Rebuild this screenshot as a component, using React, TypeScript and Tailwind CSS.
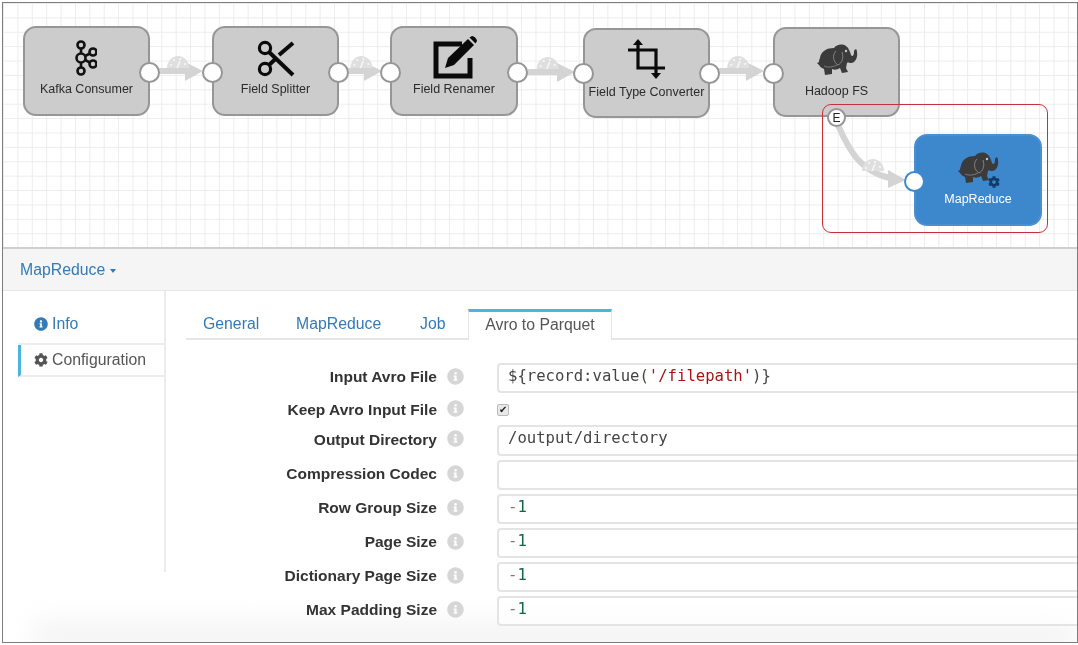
import React from 'react';
import { FaCog, FaInfoCircle } from 'react-icons/fa';

const Elephant: React.FC<{ className?: string }> = ({ className }) => (
  <svg viewBox="0 0 42 34" className={className}>
    <path
      fill="#3b3b3b"
      d="M4 15C5 8 11 5 18 5C20 2 26 0 30 3C33 5 34 9 35 12C36 14 38 13 38 9C38 6 41 5 41 9C42 15 39 20 35 20C33 20 32 19 31 20L30 25L32 29L26 30L24 25C21 27 18 27 16 26L16 31L9 32L8 26C6 25 4 24 3 22L1 20L3 19C3 18 3 17 4 15Z"
    />
    <path d="M20 8C16 12 17 19 22 22C26 20 28 15 26 9" fill="none" stroke="#8a8a8a" strokeWidth="0.9" />
    <path d="M8 23C12 25 17 24 21 22" fill="none" stroke="#8a8a8a" strokeWidth="0.8" />
    <circle cx="30" cy="8" r="1.2" fill="#c9c9c9" />
  </svg>
);

const KafkaIcon = () => (
  <svg viewBox="0 0 24 36" className="h-9 w-6">
    <g fill="none" stroke="#111" strokeWidth="2.6">
      <path d="M8 8V28M8 18L20 12M8 18L20 24" />
      <circle cx="8" cy="5" r="3.5" fill="#ccc" />
      <circle cx="8" cy="18" r="4.5" fill="#ccc" />
      <circle cx="8" cy="31" r="3.5" fill="#ccc" />
      <circle cx="20" cy="12" r="3.5" fill="#ccc" />
      <circle cx="20" cy="24" r="3.5" fill="#ccc" />
    </g>
  </svg>
);

const ScissorsIcon = () => (
  <svg viewBox="0 0 38 38" className="h-[38px] w-[38px]">
    <g fill="none" stroke="#0a0a0a">
      <circle cx="8" cy="8" r="5.6" strokeWidth="3.2" />
      <circle cx="8" cy="29" r="5.6" strokeWidth="3.2" />
      <path d="M12 12L36 35" strokeWidth="4" />
      <path d="M12 25L19.5 18" strokeWidth="4" />
      <path d="M22 15L36 3" strokeWidth="4" />
    </g>
  </svg>
);

const EditIcon = () => (
  <svg viewBox="0 0 46 44" className="h-11 w-[46px]">
    <path d="M29 8H3V40H37V22" fill="none" stroke="#0a0a0a" strokeWidth="5" />
    <path d="M12 32L15 22L35 3L41 9L21 29Z" fill="#0a0a0a" />
    <path d="M36.5 1.5L39 0C41 0 44 3 44 5L42.5 7.5Z" fill="#0a0a0a" />
  </svg>
);

const CropIcon = () => (
  <svg viewBox="0 0 38 40" className="h-10 w-[38px]">
    <g fill="none" stroke="#0a0a0a" strokeWidth="3.2">
      <path d="M10 5V29H37" />
      <path d="M0 11H28V35" />
    </g>
    <path d="M10 0L15 6H5Z" fill="#0a0a0a" />
    <path d="M28 40L33 34H23Z" fill="#0a0a0a" />
  </svg>
);

const Edge: React.FC<{ x1: number; x2: number; y: number }> = ({ x1, x2, y }) => {
  const gx = x1 + (x2 - x1) * 0.53;
  return (
    <g>
      <path d={`M${x1} ${y}H${x2 - 16}`} stroke="#d4d4d4" strokeWidth="6" />
      <path d={`M${x2 - 18} ${y - 9}L${x2} ${y}L${x2 - 18} ${y + 10}Z`} fill="#d4d4d4" />
      <Gauge x={gx} y={y - 3} />
    </g>
  );
};

const Gauge: React.FC<{ x: number; y: number }> = ({ x, y }) => (
  <g>
    <path d={`M${x - 11} ${y}A11 12 0 1 1 ${x + 11} ${y}Z`} fill="#dfdfdf" />
    <g fill="#f7f7f7">
      <circle cx={x - 7} cy={y - 3} r="1.1" />
      <circle cx={x - 4} cy={y - 8} r="1.1" />
      <circle cx={x + 2} cy={y - 9} r="1.1" />
      <circle cx={x + 7} cy={y - 4} r="1.1" />
    </g>
    <path d={`M${x - 1} ${y}L${x + 2} ${y - 7}`} stroke="#f7f7f7" strokeWidth="1.5" />
  </g>
);

const Port: React.FC<{ className: string }> = ({ className }) => (
  <span className={`absolute h-[21px] w-[21px] rounded-full border-2 bg-white ${className}`} />
);

const StageNode: React.FC<{
  label: string;
  className: string;
  top: string;
  labelTop?: string;
  text?: string;
  children: React.ReactNode;
}> = ({ label, className, top, labelTop, text, children }) => (
  <div className={`absolute h-[90px] rounded-[13px] border-2 ${className}`}>
    <div className={`flex justify-center ${top}`}>{children}</div>
    <div className={`absolute inset-x-0 text-center text-[12.5px] leading-4 ${labelTop ?? 'top-[53px]'} ${text ?? 'text-[#2b2b2b]'}`}>
      {label}
    </div>
  </div>
);

const grey = 'border-[#969696] bg-[#cccccc]';

const Pipeline = () => (
  <div className="relative h-[246px] shrink-0 border-b-2 border-[#cfcfcf] bg-white bg-[linear-gradient(#ececec_1px,transparent_1px),linear-gradient(90deg,#ececec_1px,transparent_1px)] bg-[size:14.4px_14.4px]">
    <svg className="absolute left-0 top-0 h-[245px] w-[1075px]" viewBox="0 0 1075 245">
      <g transform="translate(-3 -3)">
        <Edge x1={150} x2={203} y={71} />
        <Edge x1={338} x2={382} y={71} />
        <Edge x1={517} x2={575} y={72} />
        <Edge x1={709} x2={764} y={71} />
        <path d="M838 125C848 148 860 172 890 178" fill="none" stroke="#d4d4d4" strokeWidth="6" />
        <path d="M888 170L906 180L888 188Z" fill="#d4d4d4" />
        <Gauge x={873} y={171} />
      </g>
    </svg>

    <StageNode label="Kafka Consumer" className={`left-5 top-[23px] w-[127px] ${grey}`} top="pt-[12px] pr-[3px]">
      <KafkaIcon />
      <Port className="-right-[12px] top-[34px] border-[#969696]" />
    </StageNode>
    <StageNode label="Field Splitter" className={`left-[209px] top-[23px] w-[127px] ${grey}`} top="pt-[12px]">
      <ScissorsIcon />
      <Port className="-left-[12px] top-[34px] border-[#969696]" />
      <Port className="-right-[12px] top-[34px] border-[#969696]" />
    </StageNode>
    <StageNode label="Field Renamer" className={`left-[387px] top-[23px] w-[128px] ${grey}`} top="pt-[8px]">
      <div className="pl-[4px]">
        <EditIcon />
      </div>
      <Port className="-left-[12px] top-[34px] border-[#969696]" />
      <Port className="-right-[12px] top-[34px] border-[#969696]" />
    </StageNode>
    <StageNode
      label="Field Type Converter"
      className={`left-[580px] top-[25px] w-[127px] ${grey}`}
      top="pt-[9px]"
      labelTop="top-[54px]"
    >
      <CropIcon />
      <Port className="-left-[12px] top-[33px] border-[#969696]" />
      <Port className="-right-[12px] top-[33px] border-[#969696]" />
    </StageNode>
    <StageNode
      label="Hadoop FS"
      className={`left-[770px] top-[24px] w-[127px] ${grey}`}
      top="pt-[14px]"
      labelTop="top-[54px]"
    >
      <Elephant className="h-[34px] w-[42px]" />
      <Port className="-left-[12px] top-[34px] border-[#969696]" />
      <span className="absolute left-[52px] top-[79px] flex h-[19px] w-[19px] items-center justify-center rounded-full border-2 border-[#969696] bg-white text-[12px] leading-none text-[#222]">
        E
      </span>
    </StageNode>
    <div className="absolute left-[819px] top-[101px] h-[129px] w-[226px] rounded-[9px] border-[1.5px] border-[#c5303c]" />
    <StageNode
      label="MapReduce"
      className="left-[911px] top-[131px] h-[92px] w-[128px] border-[#4a90d0] bg-[#3d88cd]"
      top="pt-[15px]"
      labelTop="top-[55px]"
      text="text-white"
    >
      <div className="relative">
        <Elephant className="h-[34px] w-[42px]" />
        <FaCog className="absolute -right-[1px] bottom-[-3px] h-3 w-3 text-[#123a6b]" />
      </div>
      <Port className="-left-[12px] top-[35px] border-[#3d88cd]" />
    </StageNode>
  </div>
);

const Info = () => <FaInfoCircle className="h-[17px] w-[17px] shrink-0 text-[#d6d6d6]" />;

const Num = () => (
  <>
    <span className="text-[#777]">-</span>
    <span className="text-[#116644]">1</span>
  </>
);

const Row: React.FC<{ label: string; className: string; children?: React.ReactNode }> = ({ label, className, children }) => (
  <div className={`flex ${className}`}>
    <div className="flex w-[271px] items-center justify-end pb-[2px] text-[15.5px] font-bold text-[#333]">{label}</div>
    <div className="flex w-[60px] items-center pb-[4px] pl-[10px]">
      <Info />
    </div>
    {children}
  </div>
);

const Field: React.FC<{ children?: React.ReactNode }> = ({ children }) => (
  <div className="flex-1 rounded-l-[4px] border-y-2 border-l-2 border-[#e4e4e4] bg-white/60 pb-[6px] pl-[9px] pt-[1px] font-['DejaVu_Sans_Mono',monospace] text-[15.6px] leading-[20px] text-[#444]">
    {children}
  </div>
);

const Form = () => (
  <div className="pt-[23px]">
    <Row label="Input Avro File" className="h-[30px]">
      <Field>
        {'${record:value('}
        <span className="text-[#a11]">'/filepath'</span>
        {')}'}
      </Field>
    </Row>
    <Row label="Keep Avro Input File" className="mt-[3px] h-[29px]">
      <div className="flex items-center pb-[2px]">
        <span className="flex h-[12px] w-[12px] items-center justify-center rounded-[2px] border border-[#bbb] bg-[#e8e8e8] text-[10px] leading-none text-[#222]">
          ✔
        </span>
      </div>
    </Row>
    <Row label="Output Directory" className="h-[31px]">
      <Field>/output/directory</Field>
    </Row>
    <Row label="Compression Codec" className="mt-[4px] h-[30px]">
      <Field />
    </Row>
    <Row label="Row Group Size" className="mt-[4px] h-[30px]">
      <Field>
        <Num />
      </Field>
    </Row>
    <Row label="Page Size" className="mt-[4px] h-[30px]">
      <Field>
        <Num />
      </Field>
    </Row>
    <Row label="Dictionary Page Size" className="mt-[4px] h-[30px]">
      <Field>
        <Num />
      </Field>
    </Row>
    <Row label="Max Padding Size" className="mt-[4px] h-[30px]">
      <Field>
        <Num />
      </Field>
    </Row>
  </div>
);

export default function App() {
  return (
    <div className="h-[645px] w-[1078px] overflow-hidden bg-white pl-[2px] pt-[2px] font-['Liberation_Sans',Arial,sans-serif] blur-[0.5px]">
      <div className="relative flex h-[641px] w-[1076px] flex-col overflow-hidden border border-[#7d7d7d]">
        <div className="pointer-events-none absolute -bottom-[6px] left-[30px] right-0 h-[38px] bg-gradient-to-t from-[#eeeeee] to-transparent blur-md" />

        <Pipeline />

        <div className="flex h-[42px] shrink-0 items-center border-b border-[#e6e6e6] bg-[#f5f5f5] pl-[17px] text-[15.8px] text-[#337ab7]">
          MapReduce
          <span className="ml-[5px] mt-[2px] h-0 w-0 border-x-[3.5px] border-t-[4px] border-x-transparent border-t-[#337ab7]" />
        </div>

        <div className="relative flex flex-1">
          <div className="h-[281px] w-[163px] shrink-0 border-r-2 border-[#ececec] pl-[15px] pt-[11px] text-[15.8px]">
            <div className="flex h-[43px] items-center gap-[4px] border-b-2 border-[#ececec] pl-[16px] pt-[3px] text-[#337ab7]">
              <FaInfoCircle className="h-[14px] w-[14px]" />
              Info
            </div>
            <div className="flex h-[32px] items-center gap-[4px] border-b-2 border-l-[3px] border-[#ececec] border-l-[#4ab5e0] pl-[13px] text-[#555]">
              <FaCog className="h-[14px] w-[14px]" />
              Configuration
            </div>
          </div>

          <div className="flex-1 pl-[20px]">
            <div className="mt-[18px] flex h-[31px] items-end border-b-2 border-[#e6e6e6] text-[15.8px] text-[#337ab7]">
              <div className="w-[110px] pb-[2px] pl-[17px]">General</div>
              <div className="w-[124px] pb-[2px]">MapReduce</div>
              <div className="w-[48px] pb-[2px]">Job</div>
              <div className="-mb-[2px] flex h-[31px] w-[144px] items-center justify-center border-x border-t-[3px] border-[#e6e6e6] border-t-[#4ab5e0] bg-white pb-[3px] text-[#555]">
                Avro to Parquet
              </div>
            </div>
            <div className="-ml-[20px]">
              <Form />
            </div>
          </div>
        </div>
      </div>
    </div>
  );
}
